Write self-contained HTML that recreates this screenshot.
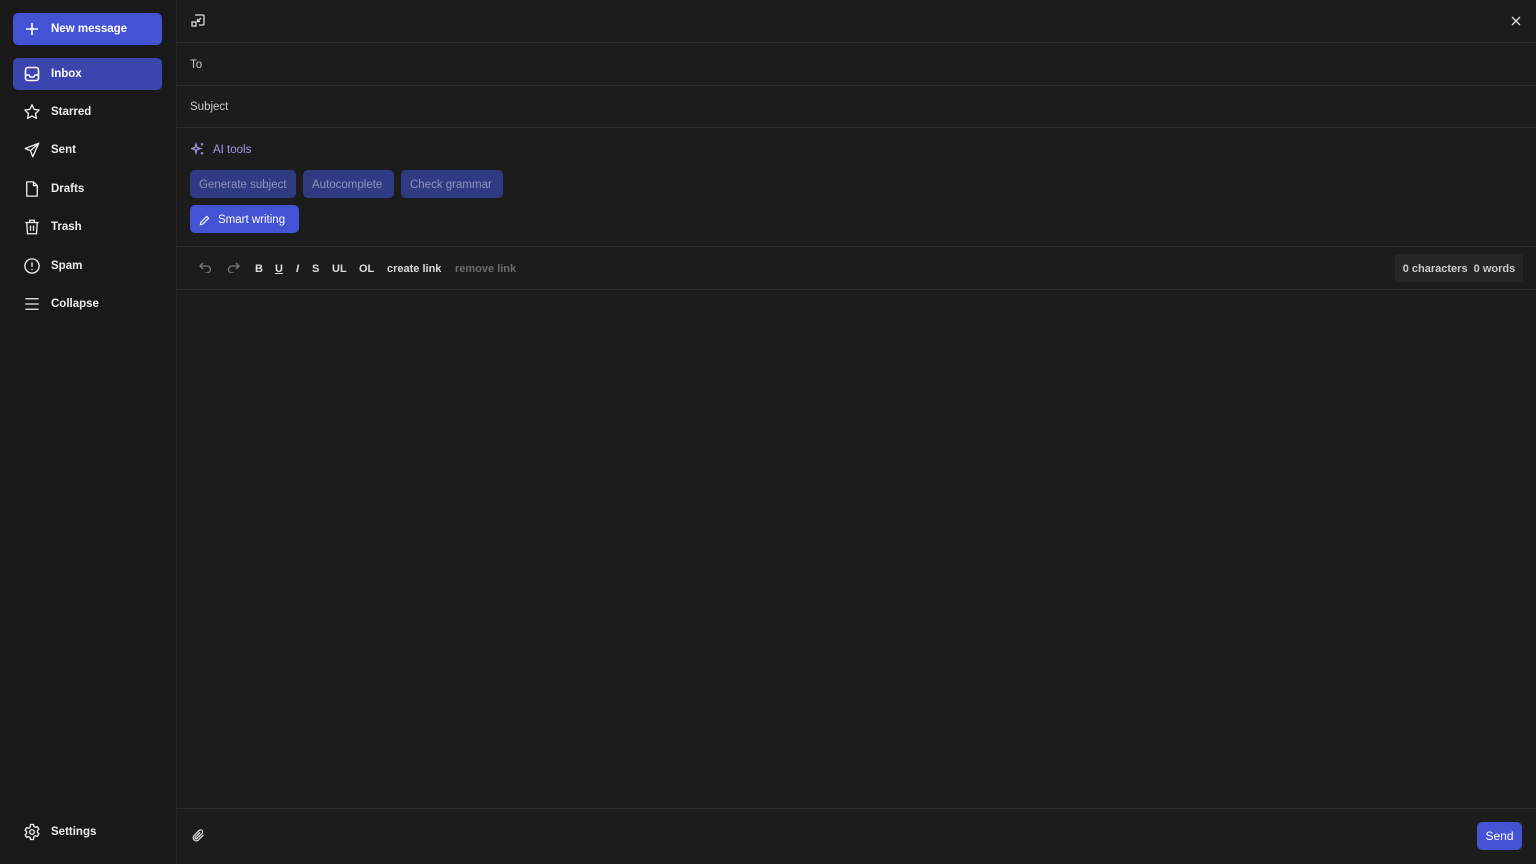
<!DOCTYPE html>
<html><head><meta charset="utf-8"><style>
*{box-sizing:border-box;margin:0;padding:0}
body{width:1536px;height:864px;background:#191919;font-family:"Liberation Sans",sans-serif;color:#e8e8e8;overflow:hidden;position:relative}
.side{position:absolute;left:0;top:0;width:176px;height:864px;background:#191919}
.btn{position:absolute;left:13px;width:149px;height:32px;border-radius:5px;display:flex;align-items:center;font-size:11.5px;font-weight:bold}
.nav{position:absolute;left:13px;width:149px;height:32px;display:flex;align-items:center;font-size:11.5px;font-weight:bold;color:#eee}
.ic{width:38px;display:flex;justify-content:center;padding-left:0}
svg{display:block}
.main{position:absolute;left:176px;top:0;width:1360px;height:864px;background:#1c1c1c;border-left:1px solid #262626;overflow:hidden}
.row{position:absolute;left:0;width:1360px;border-bottom:1px solid #2c2c2c}
.lbl{position:absolute;left:13px;font-size:11.5px;color:#ccc}
.ai{position:absolute;border-radius:5px;height:28px;font-size:11.5px;display:flex;align-items:center;padding:0 9px}
.tb{position:absolute;top:263px;font-size:11px;font-weight:bold;color:#ddd}
</style></head><body>
<div class="side">
 <div class="btn" style="top:13px;background:#4452d4;color:#fff"><div class="ic"><svg width="16" height="16" viewBox="0 0 16 16" stroke="#fff" stroke-width="1.6" fill="none"><path d="M8 2v12M2 8h12"/></svg></div>New message</div>
 <div class="btn" style="top:58px;background:#3a45b0;color:#fff"><div class="ic"><svg width="16" height="16" viewBox="0 0 16 16" stroke="#fff" stroke-width="1.6" fill="none"><rect x="1.5" y="1.5" width="13" height="13" rx="2.5"/><path d="M1.5 9h3.5l1.2 2h3.6l1.2-2h3.5"/></svg></div>Inbox</div>
 <div class="nav" style="top:96px"><div class="ic"><svg width="18" height="18" viewBox="0 0 24 24" stroke="#eee" stroke-width="1.8" fill="none" stroke-linejoin="round"><path d="M12 2.5l2.9 6 6.6.9-4.8 4.6 1.2 6.5L12 17.4l-5.9 3.1 1.2-6.5L2.5 9.4l6.6-.9z"/></svg></div>Starred</div>
 <div class="nav" style="top:134px"><div class="ic"><svg width="18" height="18" viewBox="0 0 24 24" stroke="#eee" stroke-width="1.8" fill="none" stroke-linejoin="round"><path d="M21 3L3 10l7 3 3 8zM10 13l11-10"/></svg></div>Sent</div>
 <div class="nav" style="top:173px"><div class="ic"><svg width="18" height="18" viewBox="0 0 24 24" stroke="#eee" stroke-width="1.8" fill="none" stroke-linejoin="round"><path d="M5 2.5h9l5 5v14H5zM14 2.5v5h5"/></svg></div>Drafts</div>
 <div class="nav" style="top:211px"><div class="ic"><svg width="18" height="18" viewBox="0 0 24 24" stroke="#eee" stroke-width="1.8" fill="none"><path d="M3 6h18M9 6V3h6v3M5 6l1 15h12l1-15M10 10v7M14 10v7"/></svg></div>Trash</div>
 <div class="nav" style="top:250px"><div class="ic"><svg width="18" height="18" viewBox="0 0 24 24" stroke="#eee" stroke-width="1.8" fill="none"><circle cx="12" cy="12" r="9.5"/><path d="M12 7v6M12 16v1.5"/></svg></div>Spam</div>
 <div class="nav" style="top:288px"><div class="ic"><svg width="18" height="18" viewBox="0 0 24 24" stroke="#eee" stroke-width="1.8" fill="none"><path d="M3 5h18M3 12h18M3 19h18"/></svg></div>Collapse</div>
 <div class="nav" style="top:816px"><div class="ic"><svg width="18" height="18" viewBox="0 0 24 24" stroke="#eee" stroke-width="1.8" fill="none"><circle cx="12" cy="12" r="3"/><path d="M10 2h4l.6 2.7 2 1.1 2.6-.9 2 3.4-2 1.9v2.3l2 1.9-2 3.4-2.6-.9-2 1.1L14 22h-4l-.6-2.7-2-1.1-2.6.9-2-3.4 2-1.9v-2.3l-2-1.9 2-3.4 2.6.9 2-1.1z"/></svg></div>Settings</div>
</div>
<div class="main">
 <div class="row" style="top:0;height:43px"><svg style="position:absolute;left:14px;top:14px" width="14" height="14" viewBox="0 0 14 14" stroke="#ddd" stroke-width="1.3" fill="none"><path d="M4 1h8a1 1 0 011 1v8a1 1 0 01-1 1H8"/><rect x="1" y="8" width="4" height="4"/><path d="M10 4L6.5 7.5M6.5 5v2.5H9"/></svg>
 <svg style="position:absolute;left:1334px;top:16px" width="10" height="10" viewBox="0 0 10 10" stroke="#ddd" stroke-width="1.3"><path d="M1 1l8 8M9 1l-8 8"/></svg></div>
 <div class="row" style="top:43px;height:43px"><span class="lbl" style="top:16px">To</span></div>
 <div class="row" style="top:86px;height:42px"><span class="lbl" style="top:15px">Subject</span></div>
 <svg style="position:absolute;left:14px;top:142px" width="14" height="14" viewBox="0 0 14 14" fill="none" stroke="#a897e8" stroke-width="1.2"><path d="M5 2l1 3.5 3.5 1-3.5 1L5 11l-1-3.5-3.5-1 3.5-1z"/><path d="M11 1v2.5M9.8 2.2h2.4M11 10v2.5M9.8 11.3h2.4"/></svg>
 <span style="position:absolute;left:36px;top:144px;font-size:11.5px;color:#a897e8">AI tools</span>
 <div class="ai" style="left:13px;top:170px;background:#303a82;color:#8e94bb;width:106px;padding-top:2px">Generate subject</div>
 <div class="ai" style="left:126px;top:170px;background:#303a82;color:#8e94bb;width:91px;padding-top:2px">Autocomplete</div>
 <div class="ai" style="left:224px;top:170px;background:#303a82;color:#8e94bb;width:102px;padding-top:2px">Check grammar</div>
 <div class="ai" style="left:13px;top:205px;background:#4452d4;color:#fff;width:109px;padding-top:2px"><svg width="11" height="11" viewBox="0 0 12 12" fill="none" stroke="#fff" stroke-width="1.2" style="margin-right:8px"><path d="M8.5 1.5l2 2L4 10l-2.5.5L2 8z"/></svg>Smart writing</div>
 <div class="row" style="top:246px;height:44px;border-top:1px solid #2c2c2c"></div>
 <svg style="position:absolute;left:22px;top:262px" width="13" height="11" viewBox="0 0 13 11" fill="none" stroke="#777" stroke-width="1.3"><path d="M4 1L1 4l3 3M1 4h7a3.5 3.5 0 010 7H6"/></svg>
 <svg style="position:absolute;left:50px;top:262px" width="13" height="11" viewBox="0 0 13 11" fill="none" stroke="#777" stroke-width="1.3"><path d="M9 1l3 3-3 3M12 4H5a3.5 3.5 0 000 7h2"/></svg>
 <span class="tb" style="left:78px">B</span>
 <span class="tb" style="left:98px;text-decoration:underline">U</span>
 <span class="tb" style="left:119px;font-style:italic">I</span>
 <span class="tb" style="left:135px">S</span>
 <span class="tb" style="left:155px">UL</span>
 <span class="tb" style="left:182px">OL</span>
 <span class="tb" style="left:210px">create link</span>
 <span class="tb" style="left:278px;color:#6c6c6c">remove link</span>
 <div style="position:absolute;left:1218px;top:254px;width:128px;height:28px;background:#262626;border-radius:4px;font-size:11px;font-weight:bold;color:#ccc;display:flex;align-items:center;justify-content:center;padding-top:2px">0 characters&nbsp; 0 words</div>
 <div class="row" style="top:808px;height:0"></div>
 <svg style="position:absolute;left:14px;top:828px" width="15" height="15" viewBox="0 0 24 24" fill="none" stroke="#ddd" stroke-width="2"><path d="M20 11l-8.5 8.5a5 5 0 01-7-7L13 4a3.3 3.3 0 014.7 4.7L9.3 17a1.7 1.7 0 01-2.4-2.4L14.5 7"/></svg>
 <div style="position:absolute;left:1300px;top:822px;width:45px;height:28px;background:#4452d4;border-radius:5px;color:#fff;font-size:12px;display:flex;align-items:center;justify-content:center">Send</div>
</div>
</body></html>
